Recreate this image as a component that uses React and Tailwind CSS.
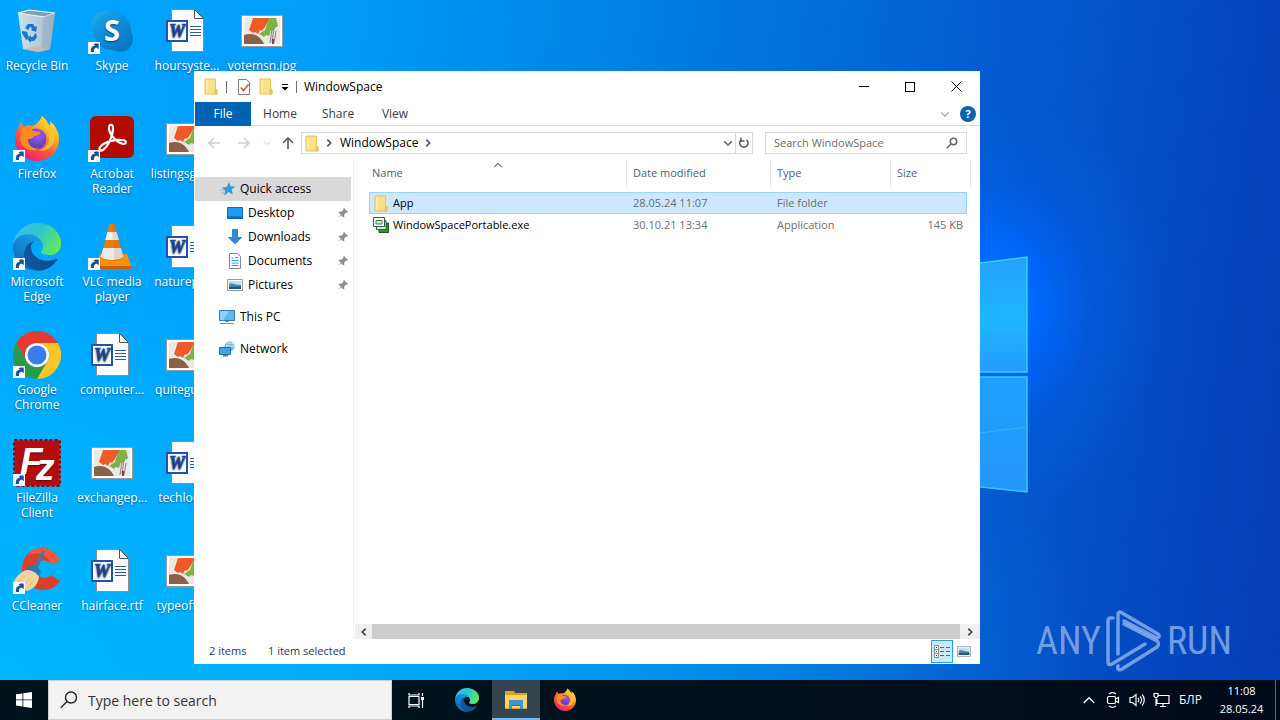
import React, { useState } from 'react';

/* ---------- small shared icons ---------- */

const Folder = () => (
  <svg viewBox="0 0 14 17" className="w-3.5 h-[17px] shrink-0">
    <path d="M1 1h10.500v10l1.500 1v4H1z" fill="#fbe08a" stroke="#e6c25a" strokeWidth="1" />
    <path d="M11 11.500h2V16h-2z" fill="#f3cd5c" stroke="#e0b84c" strokeWidth=".6" />
    <path d="M2 2h2v13H2z" fill="#fdeaa8" />
  </svg>
);

const Chevron = ({ d, className, width = 1.5 }) => (
  <svg viewBox="0 0 12 12" className={className} fill="none" stroke="currentColor" strokeWidth={width}>
    <path d={d} />
  </svg>
);

const UP = 'M1.500 8.500L6 4l4.500 4.500';
const DOWN = 'M1.500 4L6 8.500L10.500 4';
const RIGHT = 'M4 2l4 4-4 4';
const LEFT = 'M8 2L4 6l4 4';

const Arrow = ({ className, d }) => (
  <svg viewBox="0 0 14 14" className={className} fill="none" stroke="currentColor" strokeWidth="1.700">
    <path d={d} />
  </svg>
);

const Pin = () => (
  <svg viewBox="0 0 12 12" className="w-3 h-3">
    <path d="M7 1l4 4-1 .8-.8-.2-2 2 .2 2-1 .9L4 8.200.8 11.200 3.600 7.600 1.500 5.500l1-.9 1.900.1 2-2L6.200 1.800z" fill="#8b9096" />
  </svg>
);

const Picture = ({ className }) => (
  <svg viewBox="0 0 16 12" className={className}>
    <path d="M.5.5h15v11H.5z" fill="#fff" stroke="#8f9aa3" />
    <path d="M2 2h12v8H2z" fill="#bfe0f5" />
    <path d="M2 5c3-2 5 1 12 1v4H2z" fill="#4d8fb8" />
    <path d="M2 8c4-1 8 0 12-1v3H2z" fill="#23586f" />
  </svg>
);

/* ---------- desktop icons, 48x48 ---------- */

const Badge = () => (
  <g>
    <path d="M0 35h12v12H0z" fill="#f7fafc" />
    <path d="M3 45c-.6-4 1-6 4-6.500V36.500h3.500V42L9 40.600C6.500 41 5.500 42.500 6 45z" fill="#1d4f97" />
    <path d="M5.500 37h5v5z" fill="#1d4f97" />
  </g>
);

const Svg48 = ({ children }) => (
  <svg viewBox="0 0 48 48" className="w-12 h-12">{children}</svg>
);

const RecycleBin = () => (
  <Svg48>
    <defs>
      <linearGradient id="bin" x1="0" x2="1">
        <stop offset="0" stopColor="#d6e2ea" />
        <stop offset=".6" stopColor="#bccdd8" />
        <stop offset="1" stopColor="#8fa9bb" />
      </linearGradient>
    </defs>
    <path d="M5 6l11-3 26 3-5 36-12 3-15-3z" fill="url(#bin)" opacity=".95" />
    <path d="M5 6l11-3 26 3-11 4z" fill="#86a0ae" stroke="#eef6fb" strokeWidth="1.200" />
    <path d="M31 10l11-4-5 36-9 3z" fill="#9db3c2" opacity=".8" />
    <path d="M10 42l13-3 14 3-12 3z" fill="#c9b8ad" opacity=".8" />
    <g fill="#1976c9">
      <path d="M12 21l3-4h5l2 3 2-1-1 6-5-2 1-1-1-2h-1l-2 3z" />
      <path d="M9 24l6 1-1 1 2 4-3 3-4-7z" />
      <path d="M23 26l1 4-3 4h-3v2l-4-4 4-4v2h2l1-2z" />
    </g>
  </Svg48>
);

const Skype = () => (
  <Svg48>
    <defs>
      <linearGradient id="sky" x1="0" y1="0" x2=".7" y2="1">
        <stop offset="0" stopColor="#1ba7e8" />
        <stop offset="1" stopColor="#0778c9" />
      </linearGradient>
    </defs>
    <circle cx="16" cy="16" r="12" fill="#22a4e0" />
    <circle cx="32" cy="32" r="13" fill="#0879c9" />
    <circle cx="24" cy="24" r="19" fill="url(#sky)" />
    <text x="24" y="34" textAnchor="middle" fontSize="29" fontWeight="700" fill="#fff" fontFamily="Open Sans, sans-serif">S</text>
    <Badge />
  </Svg48>
);

const WordDoc = () => (
  <Svg48>
    <path d="M8.500 2.500h23l9 9v33h-32z" fill="#fdfdfd" stroke="#8d8d8d" />
    <path d="M31.500 2.500v9h9z" fill="#fff" stroke="#555" />
    <path d="M27 19.500h11M27 22.500h11M27 25.500h11M27 28.500h11" stroke="#2b5cab" />
    <path d="M4 14h20v20H4z" fill="#fff" stroke="#2453a5" strokeWidth="2" />
    <text x="14" y="30" textAnchor="middle" fontSize="18" fontWeight="700" fontStyle="italic" fill="#1c4ca0" stroke="#1c4ca0" strokeWidth=".7" fontFamily="Liberation Serif, serif">W</text>
  </Svg48>
);

const Photo = () => (
  <Svg48>
    <path d="M3.500 8.500h41v31h-41z" fill="#fff" stroke="#9b9b9b" />
    <path d="M6 11h36v26H6z" fill="#ece9e4" />
    <path d="M15 11h17l-5 9-3 4-2-1-2 4-3-2-2 1-4-3z" fill="#ee5a28" />
    <path d="M31 11h7l2 8-3 2-2 3-2-1-2 6-3-1-2 2-3-2-2-1 6-4z" fill="#7cb342" />
    <path d="M6 28c8-3 16 0 20 9H6z" fill="#8a6048" />
    <path d="M34 22l-2 14M36 21l-2 14M38 24l-2 12" stroke="#8f8fa6" strokeWidth="1.200" />
    <path d="M34 32h2v5h-2z" fill="#c62828" />
  </Svg48>
);

const FirefoxArt = () => (
  <g>
    <defs>
      <linearGradient id="fx" x1=".9" y1="0" x2=".2" y2="1">
        <stop offset="0" stopColor="#fff04a" />
        <stop offset=".3" stopColor="#ffb52b" />
        <stop offset=".6" stopColor="#ff5a36" />
        <stop offset="1" stopColor="#e5177f" />
      </linearGradient>
      <radialGradient id="fxb" cx=".6" cy=".3" r=".8">
        <stop offset="0" stopColor="#9a5cf0" />
        <stop offset="1" stopColor="#4a35b8" />
      </radialGradient>
    </defs>
    <path d="M29 1c4 3 6 6 7 10 1-1 2-3 1-5 6 5 9 12 9 18 0 13-10 22-22 22S2 36 2 24c0-5 1-9 4-12 0-2 1-4 3-5 0 3 1 4 2 5 2-2 5-2 8-1 3-1 7-3 10-10z" fill="url(#fx)" />
    <circle cx="23" cy="24" r="10.500" fill="url(#fxb)" />
    <path d="M11 12c4 0 7 1 9 4l7 1c1 2-3 4-6 4-1 3-4 3-6 3 0 7 6 11 12 9-9 6-21 0-20-12 0-4 1-7 4-9z" fill="#ff8a1f" />
    <path d="M29 1c-3 9 8 12 7 23 0 6-5 11-11 11 12 3 19-8 16-17-2-7-8-10-12-17z" fill="#ffc533" opacity=".85" />
  </g>
);

const EdgeArt = () => (
  <g>
    <defs>
      <linearGradient id="edgeNavy" x1="0" x2="1">
        <stop offset="0" stopColor="#0c59a4" />
        <stop offset="1" stopColor="#114a8b" />
      </linearGradient>
      <linearGradient id="edgeBlue" x1=".7" y1="0" x2=".2" y2="1">
        <stop offset="0" stopColor="#1b9de2" />
        <stop offset=".5" stopColor="#1484d0" />
        <stop offset="1" stopColor="#0a5fb0" />
      </linearGradient>
      <linearGradient id="edgeGreen" x1="0" y1=".3" x2="1" y2=".7">
        <stop offset="0" stopColor="#35c1f1" />
        <stop offset=".45" stopColor="#2cc5cf" />
        <stop offset="1" stopColor="#66eb55" />
      </linearGradient>
    </defs>
    <path fill="url(#edgeBlue)" d="M105.700 241.400a79.200 79.200 0 0 1-22.700-21.300 80.700 80.700 0 0 1 29.500-120.900c3.200-1.500 8.500-4.100 15.600-4 10 0 19.500 4.800 25.500 12.900 4 5.400 6.200 11.900 6.300 18.600 0-.2 24.500-79.600-80-79.600-43.900 0-80 41.700-80 78.200a130.100 130.100 0 0 0 12.100 56 128 128 0 0 0 156.400 67.100 75.600 75.600 0 0 1-62.700-6.900z" />
    <path fill="url(#edgeNavy)" d="M231 190.500c-3.400 1.800-6.900 3.400-10.500 4.700a101.500 101.500 0 0 1-35.900 6.500c-47.300 0-88.500-32.500-88.500-74.300 0-11.900 6.500-22.300 16.200-28-42.800 1.800-53.800 46.400-53.800 72.500 0 73.900 68.100 81.400 82.800 81.400 7.900 0 19.800-2.300 27-4.600l1.300-.4a128.300 128.300 0 0 0 66.600-52.800 4 4 0 0 0-5.200-5z" />
    <path fill="url(#edgeGreen)" d="M152.300 148.900c-.8 1-3.300 2.500-3.300 5.700 0 2.600 1.700 5.100 4.800 7.300 14.500 10.100 42 8.700 42 8.800 10.800 0 21.400-2.900 30.600-8.400a61.900 61.900 0 0 0 30.600-53.300c.2-22.600-8-37.600-11.400-44.200C224 22.800 178.100 0 128 0A128 128 0 0 0 0 126.200c.5-36.500 36.800-66 80-66 3.500 0 23.500.3 42 10 16.300 8.600 24.900 19 30.800 29.300 6.200 10.700 7.300 24.100 7.300 29.500s-2.700 13.300-7.800 19.900z" />
  </g>
);

const Firefox = () => (
  <Svg48>
    <FirefoxArt />
    <Badge />
  </Svg48>
);

const Edge = () => (
  <Svg48>
    <g transform="scale(.1875)"><EdgeArt /></g>
    <Badge />
  </Svg48>
);

const Chrome = () => (
  <Svg48>
    <path d="M3.200 12A24 24 0 0 1 44.800 12H24A12 12 0 0 0 13.600 30z" fill="#e33b2e" />
    <path d="M44.800 12A24 24 0 0 1 24 48L34.400 30A12 12 0 0 0 24 12z" fill="#fcc629" />
    <path d="M24 48A24 24 0 0 1 3.200 12L13.600 30A12 12 0 0 0 34.400 30z" fill="#2a9c48" />
    <circle cx="24" cy="24" r="12" fill="#fff" />
    <circle cx="24" cy="24" r="9.500" fill="#3b7ded" />
    <Badge />
  </Svg48>
);

const FileZilla = () => (
  <Svg48>
    <path d="M1.500 1.500h45v45h-45z" fill="#b30b0b" stroke="#8e0606" strokeWidth="3" strokeDasharray="3 2" />
    <path d="M2 2h44v44H2z" fill="#b50d0d" />
    <text x="7" y="35" fontSize="37" fill="#fff" fontFamily="Liberation Sans, sans-serif" fontWeight="700" fontStyle="italic">
      F<tspan x="23" y="41">z</tspan>
    </text>
    <Badge />
  </Svg48>
);

const CCleaner = () => (
  <Svg48>
    <path d="M47 14C43 5 35 0 28 1 16 2 9 11 9 22s9 21 21 21c8 0 14-4 17-9l-9-6c-5 5-14 3-15-5-1-9 9-13 15-6z" fill="#d9402c" />
    <path d="M47 14C43 5 35 0 28 1c-6 0-11 4-14 8 8-4 18-5 24 8z" fill="#ef5a3c" />
    <path d="M30 3l2 1-9 22-4-2z" fill="#2f7fb8" />
    <path d="M15 20c4-3 12 0 13 5l-3 5-12-7z" fill="#2c78ad" />
    <path d="M14 23c5 0 10 3 12 7-1 7-5 12-12 14L0 36c4-8 9-12 14-13z" fill="#f1d5a0" />
    <path d="M4 36l9-8M9 40l9-9M14 42l7-9" stroke="#e0bd82" />
    <Badge />
  </Svg48>
);

const Acrobat = () => (
  <Svg48>
    <rect x="2" y="1" width="44" height="42" rx="6" fill="#b30b00" />
    <path d="M22 10c3-1 4 2 2 10-2 6-6 13-9 15-3 2-5-1-2-4 4-4 14-7 21-6 5 0 5 4 1 4-5-1-13-8-14-15 0-2 0-4 1-4z" fill="none" stroke="#fff" strokeWidth="2.200" />
    <Badge />
  </Svg48>
);

const Vlc = () => (
  <Svg48>
    <path d="M12 31h27l5 14H7z" fill="#f6920f" />
    <path d="M7 43h37v3H7z" fill="#c85f05" />
    <path d="M21.500 1h5l9 34c-4 4-18 4-23 0z" fill="#f07b0a" />
    <path d="M19.300 9h9.300l2.300 8H17.300z" fill="#eef0f2" />
    <path d="M15.200 25h17.700l2.500 9c-4 4-18 4-22.700 0z" fill="#e9ebed" />
    <path d="M24 1h2.500l9 34c-3 2-6 3-9 3z" fill="#a84a00" opacity=".15" />
    <Badge />
  </Svg48>
);

const shortcuts = [
  [RecycleBin, 'Recycle Bin'],
  [Firefox, 'Firefox'],
  [Edge, 'Microsoft Edge'],
  [Chrome, 'Google Chrome'],
  [FileZilla, 'FileZilla Client'],
  [CCleaner, 'CCleaner'],
  [Skype, 'Skype'],
  [Acrobat, 'Acrobat Reader'],
  [Vlc, 'VLC media player'],
  [WordDoc, 'computer...'],
  [Photo, 'exchangep...'],
  [WordDoc, 'hairface.rtf'],
  [WordDoc, 'hoursyste...'],
  [Photo, 'listingsgam...'],
  [WordDoc, 'naturepar...'],
  [Photo, 'quiteguys...'],
  [WordDoc, 'techlook...'],
  [Photo, 'typeoffer...'],
  [Photo, 'votemsn.jpg'],
];

/* ---------- explorer navigation icons ---------- */

const Star = () => (
  <svg viewBox="0 0 16 16" className="w-4 h-4">
    <path d="M9 1l1.600 4.200 4.900.3-3.800 3 1 5-4-2.500L4 14.500l1.300-4.800L2 6.500l4.800-.6z" fill="#2f9ae0" />
    <path d="M0 9h4M1 12h3" stroke="#7cc0ee" />
  </svg>
);

const DesktopIcon = () => (
  <svg viewBox="0 0 16 12" className="w-4 h-3">
    <path d="M.5.5h15v11H.5z" fill="#1e9bf5" stroke="#0a6cc0" />
    <path d="M1 9.500h14V11H1z" fill="#0b63b0" />
  </svg>
);

const DownloadIcon = () => (
  <svg viewBox="0 0 16 16" className="w-4 h-4">
    <path d="M5 0h6v8h4.500L8 15.500.5 8H5z" fill="#3288d8" />
  </svg>
);

const DocumentIcon = () => (
  <svg viewBox="0 0 14 16" className="w-3.5 h-4">
    <path d="M1.500.5h8l3 3v12h-11z" fill="#fff" stroke="#7e8b95" />
    <path d="M3.500 5h2M3.500 7.500h7M3.500 10h7M3.500 12.500h7M7 4.500h3" stroke="#3b93cf" strokeWidth="1.200" />
  </svg>
);

const PcIcon = () => (
  <svg viewBox="0 0 16 16" className="w-4 h-4">
    <path d="M.5 1.500h15v10H.5z" fill="#5bb8f2" stroke="#3c7aa6" />
    <path d="M1 2h9l-6 9H1z" fill="#8bd0f8" />
    <path d="M6 12h4v1H6zM1 14h14v1H1z" fill="#7d8f9b" />
  </svg>
);

const NetworkIcon = () => (
  <svg viewBox="0 0 16 16" className="w-4 h-4">
    <circle cx="10.500" cy="5.500" r="5" fill="#7db8dd" />
    <path d="M8 2c2 1 4-1 6 1M7 5c3-1 5 1 8 0" stroke="#dceefa" fill="none" />
    <path d="M.5 6.500h11v7H.5z" fill="#3fa5ea" stroke="#2a6f9f" />
    <path d="M4 14h5v1.500H4z" fill="#5f7f93" />
  </svg>
);

const AppIcon = () => (
  <svg viewBox="0 0 16 16" className="w-4 h-4 shrink-0">
    <path d="M6 6h9.500v9.500H6z" fill="#2f9426" stroke="#1b5c17" />
    <path d="M3.500 3.500h9.500v9H3.500z" fill="#d6ecc8" stroke="#2b6b24" />
    <path d="M.5.500h11v9H.5z" fill="#fff" stroke="#2c5c66" />
    <path d="M3 3.500h6v3.500H3z" fill="#d5ead0" stroke="#3f8a36" />
  </svg>
);

const pinned = [
  [DesktopIcon, 'Desktop'],
  [DownloadIcon, 'Downloads'],
  [DocumentIcon, 'Documents'],
  [Picture, 'Pictures'],
];

const files = [
  { icon: Folder, name: 'App', date: '28.05.24 11:07', type: 'File folder', size: '', selected: true },
  { icon: AppIcon, name: 'WindowSpacePortable.exe', date: '30.10.21 13:34', type: 'Application', size: '145 KB' },
];

function TitleBar() {
  return (
    <header className="flex h-[31px] shrink-0 items-center pl-[9px] pr-px text-black">
      <Folder />
      <span className="mx-2 h-3 w-px bg-gray-500" />
      <button aria-label="Properties" className="ml-0.5">
        <svg viewBox="0 0 14 16" className="w-3.5 h-4">
          <path d="M1.500.5h8l3 3v12h-11z" fill="#fff" stroke="#7c7f86" />
          <path d="M4 8.500l2.500 3 5-6" fill="none" stroke="#d0653a" strokeWidth="1.800" />
        </svg>
      </button>
      <button aria-label="New folder" className="ml-2"><Folder /></button>
      <button aria-label="Customize Quick Access Toolbar" className="ml-2">
        <svg viewBox="0 0 8 8" className="w-2 h-2">
          <path d="M1 1h6v1H1zM.5 4h7L4 7.500z" />
        </svg>
      </button>
      <span className="mx-[7px] h-3 w-px bg-gray-500" />
      <h1 className="text-[12px]">WindowSpace</h1>
      <div className="ml-auto flex h-full">
        <button aria-label="Minimize" className="flex w-[46px] items-center justify-center">
          <span className="h-px w-2.5 bg-black" />
        </button>
        <button aria-label="Maximize" className="flex w-[46px] items-center justify-center">
          <span className="h-2.5 w-2.5 border border-black" />
        </button>
        <button aria-label="Close" className="flex w-[46px] items-center justify-center">
          <svg viewBox="0 0 11 11" className="h-[11px] w-[11px]" stroke="#000">
            <path d="M.5.5l10 10M10.500.5l-10 10" />
          </svg>
        </button>
      </div>
    </header>
  );
}

function Ribbon() {
  return (
    <div className="flex h-6 shrink-0 items-stretch border-b border-[#dadbdc] text-[12px] text-[#3b3b3b]">
      <button className="-mb-px w-14 bg-[#0063b1] text-white">File</button>
      <button className="w-[58px]">Home</button>
      <button className="w-[58px]">Share</button>
      <button className="w-[56px]">View</button>
      <button aria-label="Expand the Ribbon" className="ml-auto mr-2.5 text-gray-400">
        <Chevron d={DOWN} className="h-2.5 w-2.5" />
      </button>
      <button aria-label="Help" className="mr-1 self-center">
        <svg viewBox="0 0 16 16" className="h-4 w-4">
          <circle cx="8" cy="8" r="8" fill="#0a64ad" />
          <text x="8" y="12" textAnchor="middle" fontSize="11" fontWeight="700" fill="#fff" fontFamily="Open Sans, sans-serif">?</text>
        </svg>
      </button>
    </div>
  );
}

function AddressBar({ query, setQuery }) {
  return (
    <div className="flex h-[34px] shrink-0 items-center pl-3 pr-[13px] text-[12px]">
      <button aria-label="Back" className="text-[#cfcfcf]">
        <Arrow className="h-3.5 w-3.5" d="M13 7H2M7 2L2 7l5 5" />
      </button>
      <button aria-label="Forward" className="ml-4 text-[#cfcfcf]">
        <Arrow className="h-3.5 w-3.5" d="M1 7h11M7 2l5 5-5 5" />
      </button>
      <button aria-label="Recent locations" className="ml-3 text-[#cfcfcf]">
        <Chevron d={DOWN} className="h-2 w-2" />
      </button>
      <button aria-label="Up" className="ml-2.5 text-[#666]">
        <Arrow className="h-3.5 w-3.5" d="M7 13V2M2 7l5-5 5 5" />
      </button>
      <div className="ml-1.5 flex h-[22px] flex-1 items-center border border-[#d9d9d9] pl-[3px]">
        <Folder />
        <Chevron d={RIGHT} className="ml-[5px] h-2.5 w-2.5 text-gray-600" width={2} />
        <button className="ml-1.5">WindowSpace</button>
        <Chevron d={RIGHT} className="ml-[5px] h-2.5 w-2.5 text-gray-600" width={2} />
        <button aria-label="Previous locations" className="ml-auto mr-0.5 text-gray-500">
          <Chevron d={DOWN} className="h-2.5 w-2.5" width={2} />
        </button>
        <button aria-label="Refresh" className="flex h-full w-[17px] items-center justify-center border-l border-[#d9d9d9] text-gray-600">
          <svg viewBox="0 0 12 12" className="h-3 w-3" fill="none" stroke="currentColor" strokeWidth="1.500">
            <path d="M3 3a4.200 4.200 0 1 0 5.500-.2M3 .5V4h3.500" />
          </svg>
        </button>
      </div>
      <div className="ml-3 flex h-[22px] w-[202px] items-center border border-[#d9d9d9] pl-2 pr-2">
        <input
          type="search"
          aria-label="Search WindowSpace"
          placeholder="Search WindowSpace"
          value={query}
          onChange={(e) => setQuery(e.target.value)}
          className="min-w-0 flex-1 bg-transparent text-[11px] outline-none placeholder:text-[#6d6d6d]"
        />
        <svg viewBox="0 0 12 12" className="h-3 w-3" fill="none" stroke="#6b6b6b" strokeWidth="1.600">
          <circle cx="7.500" cy="4.500" r="3.200" />
          <path d="M5 7L.8 11.200" />
        </svg>
      </div>
    </div>
  );
}

function Sidebar() {
  return (
    <nav className="w-[159px] shrink-0 border-r border-[#f3f3f3] pt-[17px] text-[12px] text-black">
      <a href="#quick" className="mr-0.5 flex h-6 items-center bg-[#d9d9d9] pl-[25px]">
        <Star />
        <span className="ml-1">Quick access</span>
      </a>
      <ul>
        {pinned.map(([Icon, name]) => (
          <li key={name}>
            <a href={`#${name}`} className="flex h-6 items-center pl-8 pr-1">
              <span className="flex w-4 justify-center"><Icon className="w-4 h-3" /></span>
              <span className="ml-[5px] flex-1">{name}</span>
              <Pin />
            </a>
          </li>
        ))}
      </ul>
      <a href="#pc" className="mt-2 flex h-6 items-center pl-6">
        <PcIcon />
        <span className="ml-[5px]">This PC</span>
      </a>
      <a href="#network" className="mt-2 flex h-6 items-center pl-6">
        <NetworkIcon />
        <span className="ml-[5px]">Network</span>
      </a>
    </nav>
  );
}

function FileList({ query }) {
  const rows = files.filter((f) => f.name.toLowerCase().includes(query.toLowerCase()));
  const head = 'flex h-[27px] items-center border-r border-[#e5e5e5]';
  return (
    <div className="flex min-w-0 flex-1 flex-col">
      <div className="flex-1 overflow-hidden pl-[15px] pr-[9px]">
        <table className="w-full table-fixed border-separate border-spacing-0 text-[11px]">
          <thead>
            <tr className="text-left align-top text-[#4c607a]">
              <th className="h-8 p-0 align-top font-normal">
                <div className={`relative pl-[3px] ${head}`}>
                  Name
                  <Chevron d={UP} width={1.500} className="absolute left-1/2 top-0 h-2.5 w-2.5 -translate-x-1/2 text-gray-500" />
                </div>
              </th>
              <th className="w-36 p-0 align-top font-normal"><div className={`pl-1.5 ${head}`}>Date modified</div></th>
              <th className="w-[120px] p-0 align-top font-normal"><div className={`pl-1.5 ${head}`}>Type</div></th>
              <th className="w-[76px] p-0 align-top font-normal"><div className="flex h-[27px] items-center pl-1.5">Size</div></th>
              <th className="w-1 p-0 align-top"><div className={head} /></th>
            </tr>
          </thead>
          <tbody>
            {rows.map((f) => {
              const cell = f.selected ? 'border-y border-[#99d1ff] bg-[#cce8ff]' : 'border-y border-transparent';
              return (
                <tr key={f.name} className="h-[22px] text-[#6d6d6d]">
                  <td className={`p-0 text-black ${cell} ${f.selected ? 'border-l' : ''}`}>
                    <div className={`flex h-5 items-center gap-1 ${f.selected ? 'pl-[3px]' : 'pl-1'}`}>
                      <span className="flex w-4 justify-center"><f.icon /></span>
                      {f.name}
                    </div>
                  </td>
                  <td className={`p-0 pl-1.5 ${cell}`}>{f.date}</td>
                  <td className={`p-0 pl-1.5 ${cell}`}>{f.type}</td>
                  <td className={`p-0 pr-1 text-right ${cell} ${f.selected ? 'border-r' : ''}`}>{f.size}</td>
                  <td className="p-0" />
                </tr>
              );
            })}
          </tbody>
        </table>
      </div>
      <div className="ml-px flex h-[15px] shrink-0 items-center bg-[#f0f0f0] text-gray-700">
        <button aria-label="Scroll left" className="flex w-[17px] justify-center">
          <Chevron d={LEFT} className="h-2.5 w-2.5" width={2} />
        </button>
        <div className="h-full flex-1 bg-[#cdcdcd]" />
        <button aria-label="Scroll right" className="flex w-5 justify-center">
          <Chevron d={RIGHT} className="h-2.5 w-2.5" width={2} />
        </button>
      </div>
    </div>
  );
}

function StatusBar() {
  return (
    <footer className="flex h-[25px] shrink-0 items-center pl-3.5 pr-[9px] text-[11px] text-[#1e395b]">
      <span className="w-[59px]">2 items</span>
      <span>1 item selected</span>
      <button aria-label="Details view" className="ml-auto flex h-[23px] w-[22px] items-center justify-center border border-[#26a0da] bg-[#cbe8f6]">
        <svg viewBox="0 0 16 13" className="h-[13px] w-4">
          <path d="M.5.5h4v12h-4zM.5 4.500h4M.5 8.500h4" fill="#fff" stroke="#8a8f94" />
          <path d="M6 2.500h4M6 6.500h4M6 10.500h4M12 2.500h4M12 6.500h4M12 10.500h4" stroke="#5c6670" />
          <path d="M2 2h1v1H2zM2 6h1v1H2zM2 10h1v1H2z" fill="#333" />
        </svg>
      </button>
      <button aria-label="Large icons view" className="ml-1">
        <Picture className="h-[11px] w-3.5" />
      </button>
    </footer>
  );
}

function Explorer() {
  const [query, setQuery] = useState('');
  return (
    <section className="absolute bottom-4 left-[194px] right-[300px] top-[71px] flex flex-col border-l border-white bg-white text-black">
      <TitleBar />
      <Ribbon />
      <AddressBar query={query} setQuery={setQuery} />
      <div className="flex min-h-0 flex-1">
        <Sidebar />
        <FileList query={query} />
      </div>
      <StatusBar />
    </section>
  );
}

function Wallpaper() {
  return (
    <div className="absolute inset-0 overflow-hidden bg-[linear-gradient(97deg,#00a6ff_0%,#009df8_25%,#0079dd_52%,#0458cd_76%,#043eb6_100%)]">
      <div className="absolute inset-0 bg-[radial-gradient(ellipse_at_0%_100%,rgba(0,184,255,0.9)_0%,rgba(0,176,255,0.5)_35%,transparent_60%)]" />
      <div className="absolute inset-0 bg-[radial-gradient(ellipse_180px_210px_at_77%_45%,rgba(0,122,255,1)_0%,rgba(0,104,255,0.9)_30%,rgba(0,96,240,0.4)_60%,transparent_100%)]" />
      <svg viewBox="0 0 120 240" className="absolute right-[252px] top-[256px] h-[240px] w-[120px]">
        <defs>
          <linearGradient id="paneTop" x1="0" y1="0" x2="0" y2="1">
            <stop offset="0" stopColor="#22a2ff" />
            <stop offset=".55" stopColor="#1fb5ff" />
            <stop offset="1" stopColor="#259cff" />
          </linearGradient>
          <linearGradient id="paneBottom" x1="0" y1="0" x2="0" y2="1">
            <stop offset="0" stopColor="#1ea0ff" />
            <stop offset="1" stopColor="#2496fb" />
          </linearGradient>
        </defs>
        <path d="M0 16L119 1v115H0z" fill="url(#paneTop)" stroke="#35d0ff" strokeWidth="1.500" />
        <path d="M0 121h119v115L0 223z" fill="url(#paneBottom)" stroke="#35c8ff" strokeWidth="1.500" />
        <path d="M0 186l119-15" stroke="#35b4ff" />
      </svg>
    </div>
  );
}

function Watermark() {
  return (
    <div className="absolute bottom-[7px] right-12 flex h-16 items-center gap-[5px] font-['Roboto_Condensed','Liberation_Sans_Narrow','Liberation_Sans',sans-serif] text-[38px] leading-none text-[#8fb4ee]/80">
      <span>ANY</span>
      <svg viewBox="0 0 56 62" className="h-[62px] w-14" fill="none" stroke="currentColor" strokeWidth="3.500" strokeLinejoin="round" strokeLinecap="round">
        <path d="M12 44V5c0-3 2-4 4-2l36 21c2 2 1 4-1 4L18 11" />
        <path d="M7 8H5c-2 0-3 1-3 3v41c0 3 2 3 4 2l33-20" />
        <path d="M12 56c-1 3 1 5 4 3l35-22c2-2 2-5 0-6L18 14" />
      </svg>
      <span>RUN</span>
    </div>
  );
}

function Taskbar() {
  return (
    <footer className="flex h-10 shrink-0 bg-[linear-gradient(90deg,#00141d_0%,#00121c_50%,#020a1c_100%)] text-white">
      <button aria-label="Start" className="flex w-12 items-center justify-center">
        <svg viewBox="0 0 16 16" className="h-4 w-4" fill="#fff">
          <path d="M0 2.300l6.500-.9v6.100H0zM7.300 1.300L16 0v7.500H7.300zM0 8.300h6.500v6.200L0 13.600zM7.300 8.300H16V16l-8.700-1.300z" />
        </svg>
      </button>
      <label className="flex w-[344px] items-center border border-[#cfd3d6] bg-[#f2f2f2] pl-[11px] text-[14px] text-[#333]">
        <svg viewBox="0 0 18 18" className="h-[18px] w-[18px]" fill="none" stroke="#222" strokeWidth="1.400">
          <circle cx="11" cy="6.500" r="5.500" />
          <path d="M7 10.500L.8 16.700" />
        </svg>
        <input
          type="text"
          aria-label="Type here to search"
          placeholder="Type here to search"
          className="ml-2.5 min-w-0 flex-1 bg-transparent outline-none placeholder:text-[#333]"
        />
      </label>
      <button aria-label="Task View" className="mr-[3px] flex w-12 items-center justify-center">
        <svg viewBox="0 0 17 17" className="h-[17px] w-[17px]" fill="none" stroke="#fff" strokeWidth="1.200">
          <path d="M1 4.500h10v8H1zM1 1v2h10V1M1 16v-2h10v2M14.500 1v3M14.500 8v8" />
          <path d="M13 5h3v3h-3z" fill="#fff" stroke="none" />
        </svg>
      </button>
      <div className="flex gap-px">
        <button aria-label="Microsoft Edge" className="flex w-12 items-center justify-center">
          <svg viewBox="0 0 256 256" className="h-6 w-6"><EdgeArt /></svg>
        </button>
        <button aria-label="File Explorer" className="flex w-12 items-center justify-center border-b-2 border-[#76b9ed] bg-[#35454f]">
          <svg viewBox="0 0 24 20" className="mt-0.5 h-5 w-6">
            <path d="M1 1h9l1 2h12v16H1z" fill="#dca419" />
            <path d="M1 5h22v13H1z" fill="#fcd462" />
            <path d="M5 10h14v9h-3v-4H8v4H5z" fill="#3a96d0" />
            <path d="M8 15h8v1H8z" fill="#2477ad" />
          </svg>
        </button>
        <button aria-label="Firefox" className="flex w-12 items-center justify-center">
          <svg viewBox="0 0 48 48" className="h-6 w-6"><FirefoxArt /></svg>
        </button>
      </div>
      <div className="ml-auto flex text-[12px]">
        <button aria-label="Show hidden icons" className="flex w-6 items-center justify-center">
          <Chevron d={UP} className="h-3.5 w-3.5" width={1.200} />
        </button>
        <button aria-label="Meet Now" className="flex w-6 items-center justify-center">
          <svg viewBox="0 0 16 16" className="h-4 w-4" fill="none" stroke="#fff" strokeWidth="1.200">
            <rect x="2.500" y="4.500" width="8" height="7" rx="1.500" />
            <path d="M10.500 7l3-1.500v5l-3-1.500M4 2c2-1.500 5-1.500 7 0M4 14c2 1.500 5 1.500 7 0" />
          </svg>
        </button>
        <button aria-label="Speakers" className="flex w-6 items-center justify-center">
          <svg viewBox="0 0 17 16" className="h-4 w-[17px]" fill="none" stroke="#fff" strokeWidth="1.200">
            <path d="M1 5.500h2.500L7 2.500v11l-3.500-3H1zM9 6c1 1 1 3 0 4M11 4.500c2 2 2 5 0 7M13 2.500c3 3 3 8 0 11" />
          </svg>
        </button>
        <button aria-label="Network" className="flex w-6 items-center justify-center">
          <svg viewBox="0 0 17 16" className="h-4 w-[17px]" fill="none" stroke="#fff" strokeWidth="1.200">
            <path d="M5 3.500h11v8H4V7M10 11.500v3M7 14.500h6M1 1.500h4v3L3 6 1 4.500zM3 6v8" />
          </svg>
        </button>
        <button className="w-[35px]">БЛР</button>
        <button className="w-[67px] text-[11px] leading-[18px]">
          <span className="block">11:08</span>
          <span className="block">28.05.24</span>
        </button>
        <button aria-label="Show desktop" className="w-[5px] border-l border-[#5b6270]" />
      </div>
    </footer>
  );
}

export default function App() {
  return (
    <div className="flex h-screen flex-col overflow-hidden font-['Open_Sans','Noto_Sans',sans-serif]">
      <main className="relative flex-1 overflow-hidden">
        <Wallpaper />
        <ul className="relative grid grid-flow-col auto-cols-[74px] grid-rows-[repeat(6,108px)] justify-start gap-x-px pt-[7px]">
          {shortcuts.map(([Icon, name]) => (
            <li key={name}>
              <button className="flex w-full flex-col items-center text-center text-[12px] leading-[15px] text-white [text-shadow:0_1px_2px_rgba(0,0,0,0.5)]">
                <Icon />
                <span className="mt-[3px]">{name}</span>
              </button>
            </li>
          ))}
        </ul>
        <Watermark />
        <Explorer />
      </main>
      <Taskbar />
    </div>
  );
}
